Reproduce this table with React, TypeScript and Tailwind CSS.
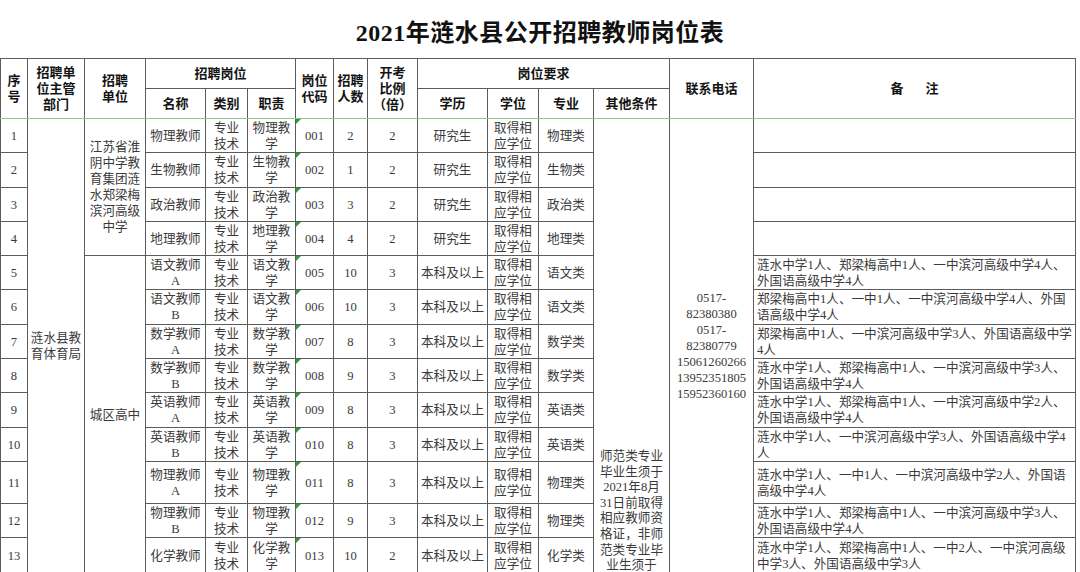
import React from "react";

const LINE = "border border-[#5c5c5c]";
const TH = `${LINE} p-0 text-center align-middle font-bold text-[13px] leading-[16px] text-[#141414]`;
const TH_LOW = `${TH} border-b-[#8cc88c]`;
const TD = `${LINE} px-[1px] py-0 text-center align-middle text-[12.6px] leading-[16px] text-[#3a3a3a]`;

type Row = {
  no: number;
  name: string;
  tag?: string;
  duty: [string, string];
  code: string;
  num: string;
  ratio: string;
  edu: string;
  major: string;
  note?: [string, string];
  h: string;
};

const ROWS: Row[] = [
  { no: 1, name: "物理教师", duty: ["物理教", "学"], code: "001", num: "2", ratio: "2", edu: "研究生", major: "物理类", h: "h-[34px]" },
  { no: 2, name: "生物教师", duty: ["生物教", "学"], code: "002", num: "1", ratio: "2", edu: "研究生", major: "生物类", h: "h-[35px]" },
  { no: 3, name: "政治教师", duty: ["政治教", "学"], code: "003", num: "3", ratio: "2", edu: "研究生", major: "政治类", h: "h-[34px]" },
  { no: 4, name: "地理教师", duty: ["地理教", "学"], code: "004", num: "4", ratio: "2", edu: "研究生", major: "地理类", h: "h-[34px]" },
  {
    no: 5, name: "语文教师", tag: "A", duty: ["语文教", "学"], code: "005", num: "10", ratio: "3", edu: "本科及以上", major: "语文类", h: "h-[34px]",
    note: ["涟水中学1人、郑梁梅高中1人、一中滨河高级中学4人、", "外国语高级中学4人"],
  },
  {
    no: 6, name: "语文教师", tag: "B", duty: ["语文教", "学"], code: "006", num: "10", ratio: "3", edu: "本科及以上", major: "语文类", h: "h-[35px]",
    note: ["郑梁梅高中1人、一中1人、一中滨河高级中学4人、外国", "语高级中学4人"],
  },
  {
    no: 7, name: "数学教师", tag: "A", duty: ["数学教", "学"], code: "007", num: "8", ratio: "3", edu: "本科及以上", major: "数学类", h: "h-[34px]",
    note: ["郑梁梅高中1人、一中滨河高级中学3人、外国语高级中学", "4人"],
  },
  {
    no: 8, name: "数学教师", tag: "B", duty: ["数学教", "学"], code: "008", num: "9", ratio: "3", edu: "本科及以上", major: "数学类", h: "h-[34px]",
    note: ["涟水中学1人、郑梁梅高中1人、一中滨河高级中学3人、", "外国语高级中学4人"],
  },
  {
    no: 9, name: "英语教师", tag: "A", duty: ["英语教", "学"], code: "009", num: "8", ratio: "3", edu: "本科及以上", major: "英语类", h: "h-[35px]",
    note: ["涟水中学1人、郑梁梅高中1人、一中滨河高级中学2人、", "外国语高级中学4人"],
  },
  {
    no: 10, name: "英语教师", tag: "B", duty: ["英语教", "学"], code: "010", num: "8", ratio: "3", edu: "本科及以上", major: "英语类", h: "h-[34px]",
    note: ["涟水中学1人、一中滨河高级中学3人、外国语高级中学4", "人"],
  },
  {
    no: 11, name: "物理教师", tag: "A", duty: ["物理教", "学"], code: "011", num: "8", ratio: "3", edu: "本科及以上", major: "物理类", h: "h-[42px]",
    note: ["涟水中学1人、一中1人、一中滨河高级中学2人、外国语", "高级中学4人"],
  },
  {
    no: 12, name: "物理教师", tag: "B", duty: ["物理教", "学"], code: "012", num: "9", ratio: "3", edu: "本科及以上", major: "物理类", h: "h-[34px]",
    note: ["涟水中学1人、郑梁梅高中1人、一中滨河高级中学3人、", "外国语高级中学4人"],
  },
  {
    no: 13, name: "化学教师", duty: ["化学教", "学"], code: "013", num: "10", ratio: "2", edu: "本科及以上", major: "化学类", h: "h-[36px]",
    note: ["涟水中学1人、郑梁梅高中1人、一中2人、一中滨河高级", "中学3人、外国语高级中学3人"],
  },
];

const PHONES = ["0517-", "82380380", "0517-", "82380779", "15061260266", "13952351805", "15952360160"];

const OTHER = ["师范类专业", "毕业生须于", "2021年8月", "31日前取得", "相应教师资", "格证，非师", "范类专业毕", "业生须于"];

const SCHOOL = ["江苏省淮", "阴中学教", "育集团涟", "水郑梁梅", "滨河高级", "中学"];

function Lines({ items }: { items: string[] }) {
  return (
    <>
      {items.map((t, i) => (
        <div key={i} className="whitespace-nowrap">{t}</div>
      ))}
    </>
  );
}

export default function App() {
  return (
    <div className="w-[1080px] h-[572px] overflow-hidden bg-white font-['Liberation_Serif','Noto_Sans_CJK_SC',serif]">
      {/* 标题 */}
      <div className="h-[58px] pt-[8px] flex items-center justify-center">
        <h1 className="text-[24px] font-bold text-[#111] leading-none tracking-[0.5px]">
          2021年涟水县公开招聘教师岗位表
        </h1>
      </div>

      <table className="table-fixed border-collapse w-[1075px]">
        <colgroup>
          <col className="w-[27px]" />
          <col className="w-[57px]" />
          <col className="w-[61px]" />
          <col className="w-[60px]" />
          <col className="w-[42px]" />
          <col className="w-[48px]" />
          <col className="w-[38px]" />
          <col className="w-[34px]" />
          <col className="w-[50px]" />
          <col className="w-[70px]" />
          <col className="w-[51px]" />
          <col className="w-[55px]" />
          <col className="w-[76px]" />
          <col className="w-[84px]" />
          <col className="w-[322px]" />
        </colgroup>
        <thead>
          <tr className="h-[30px]">
            <th rowSpan={2} className={TH_LOW}>序<br />号</th>
            <th rowSpan={2} className={TH_LOW}>招聘单<br />位主管<br />部门</th>
            <th rowSpan={2} className={TH_LOW}>招聘<br />单位</th>
            <th colSpan={3} className={TH}>招聘岗位</th>
            <th rowSpan={2} className={TH_LOW}>岗位<br />代码</th>
            <th rowSpan={2} className={TH_LOW}>招聘<br />人数</th>
            <th rowSpan={2} className={TH_LOW}>开考<br />比例<br />（倍）</th>
            <th colSpan={4} className={TH}>岗位要求</th>
            <th rowSpan={2} className={TH_LOW}>联系电话</th>
            <th rowSpan={2} className={TH_LOW}>
              备<span className="inline-block w-[22px]" />注
            </th>
          </tr>
          <tr className="h-[30px]">
            <th className={TH_LOW}>名称</th>
            <th className={TH_LOW}>类别</th>
            <th className={TH_LOW}>职责</th>
            <th className={TH_LOW}>学历</th>
            <th className={TH_LOW}>学位</th>
            <th className={TH_LOW}>专业</th>
            <th className={TH_LOW}>其他条件</th>
          </tr>
        </thead>
        <tbody>
          {ROWS.map((r) => (
            <tr key={r.no} className={r.h}>
              <td className={TD}>{r.no}</td>
              {r.no === 1 && (
                <td rowSpan={13} className={`${TD} leading-[15px]`}>
                  <Lines items={["涟水县教", "育体育局"]} />
                </td>
              )}
              {r.no === 1 && (
                <td rowSpan={4} className={`${TD} leading-[15px]`}>
                  <Lines items={SCHOOL} />
                </td>
              )}
              {r.no === 5 && (
                <td rowSpan={9} className={TD}>城区高中</td>
              )}
              <td className={TD}>
                <div className="whitespace-nowrap">{r.name}</div>
                {r.tag && <div>{r.tag}</div>}
              </td>
              <td className={TD}>
                <div>专业</div>
                <div>技术</div>
              </td>
              <td className={TD}>
                <div>{r.duty[0]}</div>
                <div>{r.duty[1]}</div>
              </td>
              <td className={`${TD} relative`}>
                <span className="absolute left-0 top-0 w-0 h-0 border-t-[5px] border-r-[5px] border-t-[#2f9a3a] border-r-transparent" />
                {r.code}
              </td>
              <td className={TD}>{r.num}</td>
              <td className={TD}>{r.ratio}</td>
              <td className={`${TD} whitespace-nowrap`}>{r.edu}</td>
              <td className={TD}>
                <div>取得相</div>
                <div>应学位</div>
              </td>
              <td className={TD}>{r.major}</td>
              {r.no === 1 && (
                <td rowSpan={13} className={`${LINE} p-0 align-top`}>
                  <div className="h-[454px] overflow-hidden pt-[330px] text-center text-[12.6px] leading-[15.6px] text-[#3a3a3a]">
                    <Lines items={OTHER} />
                  </div>
                </td>
              )}
              {r.no === 1 && (
                <td rowSpan={13} className={`${TD} leading-[15.6px]`}>
                  <Lines items={PHONES} />
                </td>
              )}
              <td className={`${TD} text-left pl-[3px]`}>
                {r.note && <Lines items={r.note} />}
              </td>
            </tr>
          ))}
        </tbody>
      </table>
    </div>
  );
}
